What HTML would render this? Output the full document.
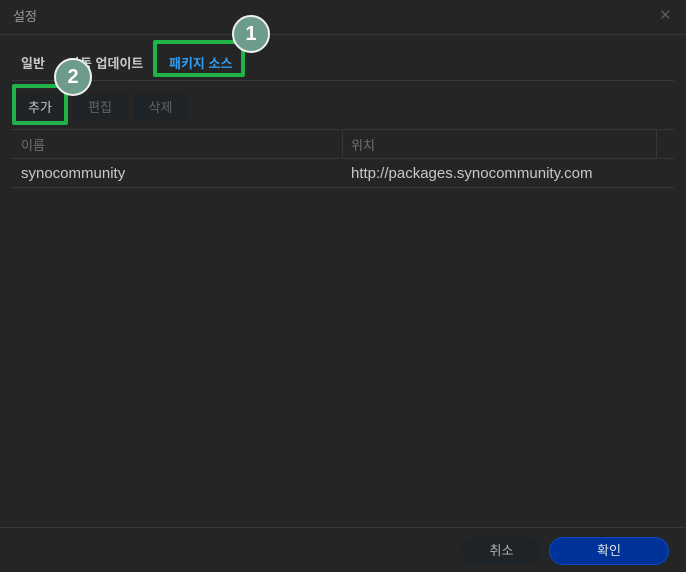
<!DOCTYPE html>
<html><head><meta charset="utf-8"><style>
*{margin:0;padding:0;box-sizing:border-box}
body{width:686px;height:572px;background:#252525;font-family:"Liberation Sans","Noto Sans CJK KR",sans-serif;position:relative;overflow:hidden;color:#c8c8c8;font-size:13px}
.a{position:absolute}
.line{position:absolute;height:1px;background:#33383d}
.btn{position:absolute;background:#1e2328;border-radius:3px;color:#5e6368;text-align:center;font-size:13px}
.circ{position:absolute;width:38px;height:38px;border-radius:50%;background:#6e9c8c;border:2px solid #f0f0f0;color:#fff;font-weight:bold;font-size:20px;text-align:center;line-height:34px}
.gb{position:absolute;border:4px solid #1fb34a;border-radius:2px}
</style></head><body>
<div class="a" style="left:13px;top:6px;color:#9a9a9a;font-size:13px">설정</div>
<div class="a" style="left:659px;top:6px;color:#5a5a5a;font-size:15px">✕</div>
<div class="line" style="left:0;top:34px;width:686px"></div>
<div class="a" style="left:21px;top:53px;font-weight:bold;color:#c8c8c8">일반</div>
<div class="a" style="left:68px;top:53px;font-weight:bold;color:#c8c8c8">자동 업데이트</div>
<div class="a" style="left:169px;top:53px;font-weight:bold;color:#2f9bf0">패키지 소스</div>
<div class="line" style="left:12px;top:80px;width:662px"></div>
<div class="gb" style="left:153px;top:40px;width:92px;height:37px"></div>
<div class="circ" style="left:232px;top:15px">1</div>
<div class="btn" style="left:17px;top:94px;width:46px;height:27px;line-height:27px;color:#c8c8c8">추가</div>
<div class="btn" style="left:73px;top:94px;width:54px;height:27px;line-height:27px">편집</div>
<div class="btn" style="left:134px;top:94px;width:53px;height:27px;line-height:27px">삭제</div>
<div class="gb" style="left:12px;top:84px;width:56px;height:41px"></div>
<div class="circ" style="left:54px;top:58px">2</div>
<div class="line" style="left:12px;top:129px;width:662px"></div>
<div class="a" style="left:342px;top:130px;width:1px;height:28px;background:#33383d"></div>
<div class="a" style="left:656px;top:130px;width:1px;height:28px;background:#33383d"></div>
<div class="a" style="left:21px;top:135px;color:#6e6e6e">이름</div>
<div class="a" style="left:351px;top:135px;color:#6e6e6e">위치</div>
<div class="line" style="left:12px;top:158px;width:662px"></div>
<div class="a" style="left:21px;top:165px;color:#c8c8c8;font-size:15px">synocommunity</div>
<div class="a" style="left:351px;top:165px;color:#c8c8c8;font-size:15px">http://packages.synocommunity.com</div>
<div class="line" style="left:12px;top:187px;width:662px"></div>
<div class="line" style="left:0;top:527px;width:686px"></div>
<div class="btn" style="left:462px;top:537px;width:79px;height:28px;line-height:28px;border-radius:14px;color:#b0b0b0">취소</div>
<div class="a" style="left:549px;top:537px;width:120px;height:28px;line-height:26px;border-radius:14px;background:#003399;border:1px solid #0a4ac0;color:#e0e0e0;text-align:center">확인</div>
</body></html>
